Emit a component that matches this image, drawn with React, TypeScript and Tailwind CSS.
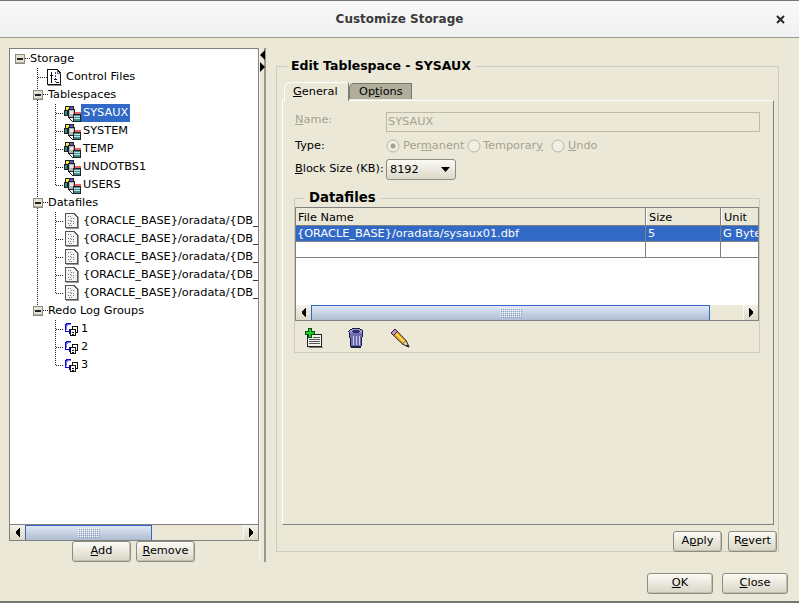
import React from 'react'

const dots = { stroke: '#222', strokeWidth: 1, strokeDasharray: '1 1', shapeRendering: 'crispEdges' as const }

function Expander({ x }: { x: number }) {
  return (
    <g shapeRendering="crispEdges">
      <rect x={x + 0.5} y={4.5} width={9} height={9} fill="#e4e1d2" stroke="#8a8a80" />
      <rect x={x + 1} y={12} width={8} height={1} fill="#b0ae9e" />
      <rect x={x + 2} y={8} width={6} height={2} fill="#222" />
    </g>
  )
}

// dotted connectors of one tree row, coordinates are relative to the tree box
function Guide({ kind, last, stem }: { kind: 'root' | 'branch' | 'leaf' | 'child'; last?: boolean; stem?: boolean }) {
  const w = kind === 'root' ? 20 : kind === 'branch' ? 38 : kind === 'leaf' ? 37 : 54
  return (
    <svg width={w} height={18} className="shrink-0">
      {kind === 'root' && (
        <>
          <Expander x={5} />
          <line x1={15} y1={8.5} x2={20} y2={8.5} {...dots} />
        </>
      )}
      {kind === 'leaf' && (
        <>
          <line x1={27.5} y1={0} x2={27.5} y2={18} {...dots} />
          <line x1={28} y1={9.5} x2={37} y2={9.5} {...dots} />
        </>
      )}
      {kind === 'branch' && (
        <>
          <line x1={27.5} y1={0} x2={27.5} y2={5} {...dots} />
          {!last && <line x1={27.5} y1={14} x2={27.5} y2={18} {...dots} />}
          <Expander x={23} />
          <line x1={33} y1={8.5} x2={38} y2={8.5} {...dots} />
        </>
      )}
      {kind === 'child' && (
        <>
          {stem && <line x1={27.5} y1={0} x2={27.5} y2={18} {...dots} />}
          <line x1={45.5} y1={0} x2={45.5} y2={last ? 10 : 18} {...dots} />
          <line x1={46} y1={9.5} x2={54} y2={9.5} {...dots} />
        </>
      )}
    </svg>
  )
}

function ControlFileIcon() {
  return (
    <svg width={15} height={17} viewBox="0 0 15 17" shapeRendering="crispEdges" className="shrink-0">
      <path d="M.5.5H10L13.5 4V15.5H.5Z" fill="#fff" stroke="#111" />
      <rect x={1} y={16} width={14} height={1} fill="#888" />
      <path d="M10 .5V4H13.5" fill="none" stroke="#666" />
      <path d="M4.5 3V14" stroke="#111" />
      <path d="M8.5 3V13" stroke="#2a3fa8" strokeDasharray="2 1" />
      <path d="M3 6H6M7 10H10M9 13H12" stroke="#111" />
    </svg>
  )
}

function TablespaceIcon() {
  return (
    <svg width={17} height={17} viewBox="0 0 17 17" shapeRendering="crispEdges" className="shrink-0">
      <rect x={1.5} y={1.5} width={4} height={6} fill="#f4ef3a" stroke="#222" />
      <rect x={5.5} y={1.5} width={4} height={3} fill="#5b5bd6" stroke="#222" />
      <rect x={.5} y={5.5} width={3} height={5} fill="#2f8f8f" stroke="#222" />
      <rect x={4.5} y={4.5} width={6} height={8} fill="#b4b4b4" stroke="#222" />
      <rect x={6} y={6} width={3} height={3} fill="#e8e8e8" />
      <rect x={11} y={7} width={6} height={3} fill="#f06060" />
      <path d="M5 13L9 17" stroke="#222" />
      <rect x={9.5} y={9.5} width={7} height={7} fill="#3f8f8f" stroke="#222" />
      <path d="M10 11.500H16M10 13.500H16" stroke="#c4e6e6" />
    </svg>
  )
}

function DataFileIcon() {
  return (
    <svg width={14} height={16} viewBox="0 0 14 16" shapeRendering="crispEdges" className="shrink-0">
      <path d="M.5.5H9L12.5 4V14.5H.5Z" fill="#f4f4f4" stroke="#555" />
      <rect x={1} y={15} width={13} height={1} fill="#999" />
      <rect x={13} y={4} width={1} height={12} fill="#999" />
      <path d="M3 3H7M6 5H10M3 7H6M6 8H10M3 10H6M8 10H10M4 12H8" stroke="#777" strokeDasharray="1 1" />
    </svg>
  )
}

function RedoIcon() {
  return (
    <svg width={14} height={14} viewBox="0 0 14 14" shapeRendering="crispEdges" className="shrink-0">
      <path d="M7 1.500H3L1.500 3V9.500H5" fill="none" stroke="#0808d8" />
      <path d="M7 2.500H4L2.500 4V8" fill="none" stroke="#7a7ae0" />
      <path d="M5.500 7V12M6.500 8V11" stroke="#0808d8" />
      <rect x={8.500} y={4.500} width={5} height={6} fill="#fff" stroke="#111" />
      <rect x={6.500} y={7.500} width={5} height={6} fill="#fff" stroke="#111" />
      <path d="M8 10H10M8 12H10" stroke="#111" />
    </svg>
  )
}

function Row({ guide, icon, label, selected, gap = 'ml-[3px]' }: { guide: React.ReactNode; icon?: React.ReactNode; label: string; selected?: boolean; gap?: string }) {
  return (
    <div className="flex items-center h-[18px] whitespace-nowrap">
      {guide}
      {icon}
      {selected ? (
        <span className="px-[2px] h-[18px] leading-[18px] bg-[#3169c6] text-white">{label}</span>
      ) : (
        <span className={`${icon ? gap : 'ml-[0px]'} leading-[18px]`}>{label}</span>
      )}
    </div>
  )
}

function ArrowBtn({ dir }: { dir: 'l' | 'r' }) {
  return (
    <div className={`w-[15px] h-full shrink-0 flex items-center justify-center bg-gradient-to-b from-[#f4f2e6] to-[#dcd9c8] ${dir === 'r' ? 'border-l border-l-[#fbfaf2]' : ''}`}>
      <svg width={5} height={9} viewBox="0 0 5 9" shapeRendering="crispEdges">
        <path d={dir === 'l' ? 'M5 0V9H4V8H3V7H2V6H1V3H2V2H3V1H4V0Z' : 'M0 0V9H1V8H2V7H3V6H4V3H3V2H2V1H1V0Z'} fill="#000" />
      </svg>
    </div>
  )
}

function Scrollbar({ thumb }: { thumb: string }) {
  return (
    <div className="h-[15px] flex shrink-0 bg-[#ebe8d8]">
      <ArrowBtn dir="l" />
      <div className={`${thumb} h-full flex items-center justify-center border-t border-x border-[#3169c6] bg-gradient-to-b from-[#dfe7f2] to-[#aebdd2]`}>
        <svg width={22} height={10} className="opacity-80">
          <defs>
            <pattern id="grip" width={2} height={2} patternUnits="userSpaceOnUse">
              <rect width={1} height={1} fill="#fff" />
              <rect x={1} y={1} width={1} height={1} fill="#7f95b8" />
            </pattern>
          </defs>
          <rect width={22} height={10} fill="url(#grip)" />
        </svg>
      </div>
      <div className="flex-1" />
      <ArrowBtn dir="r" />
    </div>
  )
}

function Btn({ w, children }: { w: string; children: React.ReactNode }) {
  return (
    <button className={`${w} h-[21px] flex items-center justify-center rounded-[3px] border border-[#8c8c80] bg-gradient-to-b from-[#fbfaf4] to-[#d9d6c6] text-black shadow-[inset_-1px_-1px_0_#c4c1b0]`}>
      {children}
    </button>
  )
}

function Radio({ checked }: { checked?: boolean }) {
  return (
    <svg width={14} height={14} className="shrink-0">
      <circle cx={7} cy={7} r={6} fill="#f1efe4" stroke="#b9b6a4" />
      {checked && <circle cx={7} cy={7} r={2.500} fill="#a5a28f" />}
    </svg>
  )
}

function AddIcon() {
  return (
    <svg width={19} height={20} viewBox="0 0 19 20" shapeRendering="crispEdges">
      <rect x={3.500} y={6.500} width={14} height={12} fill="#f4f4ec" stroke="#222" />
      <rect x={5} y={19} width={14} height={1} fill="#777" />
      <path d="M9 9.500H16M5 11.500H16M5 13.500H16M5 15.500H16" stroke="#555" />
      <path d="M4.500 .500H7.500V3.500H10.500V6.500H7.500V9.500H4.500V6.500H1.500V3.500H4.500Z" fill="#1fd12f" stroke="#064d10" />
    </svg>
  )
}

function TrashIcon() {
  return (
    <svg width={16} height={20} viewBox="0 0 16 20" shapeRendering="crispEdges">
      <ellipse cx={8} cy={3.500} rx={7} ry={3} fill="#9a9ad0" stroke="#1c1c44" />
      <ellipse cx={8} cy={3.500} rx={4} ry={1.500} fill="#2e2e66" />
      <path d="M1.500 5L3 18.500H13L14.500 5" fill="#6f6fb0" stroke="#1c1c44" />
      <path d="M5 8V17M8 8V17M11 8V17" stroke="#c8c8ea" />
      <rect x={3} y={18} width={10} height={2} fill="#1c1c44" />
    </svg>
  )
}

function PencilIcon() {
  return (
    <svg width={20} height={20} viewBox="0 0 20 20">
      <path d="M1 5L5 1L16 12.500L19 19L12.500 16Z" fill="#f5ab1c" stroke="#222" />
      <path d="M1 5L5 1L7.500 3.500L3.500 7.500Z" fill="#c88ad0" stroke="#222" />
      <path d="M6 5.500L15 15" stroke="#ffe27a" strokeWidth={1.500} />
      <path d="M12.500 16L16 12.500L19 19Z" fill="#e8dcb0" stroke="#222" strokeWidth={.7} />
      <path d="M17 16.500L19 19L16 18Z" fill="#000" />
    </svg>
  )
}

function StorageTree() {
  const spaces = ['SYSAUX', 'SYSTEM', 'TEMP', 'UNDOTBS1', 'USERS']
  return (
    <div className="flex-1 bg-white overflow-hidden pt-[1px]">
      <Row guide={<Guide kind="root" />} label="Storage" />
      <Row guide={<Guide kind="leaf" />} icon={<ControlFileIcon />} label="Control Files" gap="ml-[4px]" />
      <Row guide={<Guide kind="branch" />} label="Tablespaces" />
      {spaces.map((s, i) => (
        <Row key={s} guide={<Guide kind="child" stem last={i === spaces.length - 1} />} icon={<TablespaceIcon />} label={s} selected={i === 0} gap="ml-[2px]" />
      ))}
      <Row guide={<Guide kind="branch" />} label="Datafiles" />
      {[0, 1, 2, 3, 4].map((i) => (
        <Row key={i} guide={<Guide kind="child" stem last={i === 4} />} icon={<span className="ml-[1px] flex"><DataFileIcon /></span>} label="{ORACLE_BASE}/oradata/{DB_" gap="ml-[4px]" />
      ))}
      <Row guide={<Guide kind="branch" last />} label="Redo Log Groups" />
      {['1', '2', '3'].map((n, i) => (
        <Row key={n} guide={<Guide kind="child" last={i === 2} />} icon={<RedoIcon />} label={n} gap="ml-[3px]" />
      ))}
    </div>
  )
}

function DatafilesTable() {
  const row = 'grid grid-cols-[350px_75px_1fr] shrink-0 border-b border-[#808080] whitespace-nowrap overflow-hidden'
  return (
    <div className="h-[114px] flex flex-col border border-[#808080] bg-white">
      <div className={`${row} h-[18px] leading-[19px] bg-[#ebe8d8]`}>
        <div className="pl-[2px] border-r border-[#808080]">File Name</div>
        <div className="pl-[2px] border-r border-[#808080] border-l border-l-white">Size</div>
        <div className="pl-[2px] border-l border-l-white">Unit</div>
      </div>
      <div className={`${row} h-[16px] leading-[15px] bg-[#3169c6] text-white`}>
        <div className="pl-[1px] border-r border-[#808080]">{'{ORACLE_BASE}/oradata/sysaux01.dbf'}</div>
        <div className="pl-[2px] border-r border-[#808080]">5</div>
        <div className="pl-[2px] overflow-hidden">G Byte</div>
      </div>
      <div className={`${row} h-[16px]`}>
        <div className="border-r border-[#808080]" />
        <div className="border-r border-[#808080]" />
        <div />
      </div>
      <div className="flex-1" />
      <div className="shrink-0">
        <Scrollbar thumb="w-[399px]" />
      </div>
    </div>
  )
}

export default function App() {
  return (
    <div className="w-[799px] h-[603px] flex flex-col overflow-hidden bg-[#ebe8d8] text-black text-[11.3px] font-['DejaVu_Sans',sans-serif]">
      <div className="h-[38px] shrink-0 relative flex items-center justify-center border-t border-t-[#777] border-b border-b-[#9b9a8e] bg-gradient-to-b from-[#f9f9f9] to-[#f1f1f1]">
        <span className="text-[12px] font-bold text-[#3a3a3a]">Customize Storage</span>
        <svg width={9} height={9} viewBox="0 0 9 9" className="absolute right-[14px] top-[14px]">
          <path d="M1 1L8 8M8 1L1 8" stroke="#2a2a2a" strokeWidth={2} />
        </svg>
      </div>

      <div className="h-[525px] shrink-0 flex pt-[10px]">
        <div className="w-[259px] shrink-0 pl-[9px] flex flex-col">
          <div className="h-[493px] w-[250px] flex flex-col border border-[#808080]">
            <StorageTree />
            <div className="border-t border-[#808080] shrink-0">
              <Scrollbar thumb="w-[127px]" />
            </div>
          </div>
          <div className="flex gap-[5px] ml-[63px]">
            <Btn w="w-[59px]"><span><u>A</u>dd</span></Btn>
            <Btn w="w-[59px]"><span><u>R</u>emove</span></Btn>
          </div>
        </div>

        <div className="w-[7px] h-[514px] shrink-0 flex flex-col gap-[2px] pt-[2px] border-l border-l-[#f7f6ee] border-r-2 border-r-[#9a998d]">
          <svg width={5} height={10}><path d="M5 0V10L0 5Z" fill="#000" /></svg>
          <svg width={5} height={10}><path d="M0 0V10L5 5Z" fill="#000" /></svg>
        </div>

        <div className="pl-[10px]">
          <fieldset className="w-[503px] h-[494px] border border-[#cfcdbd] mt-[10px]">
            <legend className="ml-[10px] px-[4px] h-[16px] leading-[16px] text-[12.5px] font-bold">Edit Tablespace - SYSAUX</legend>
            <div className="pl-[5px] pt-[8px]">
              <div className="flex ml-[2px] h-[18px] relative">
                <div className="w-[65px] h-[19px] pl-[8px] leading-[18px] bg-[#ebe8d8] border-t border-l border-r border-t-white border-l-white border-r-[#808080] rounded-tl-[6px] relative z-10">
                  <u>G</u>eneral
                </div>
                <div className="w-[63px] h-[16px] mt-[1px] pl-[9px] leading-[16px] bg-[#b1af9b] border-t border-l border-r border-[#77766a] rounded-tl-[5px]">
                  Op<u>t</u>ions
                </div>
              </div>
              <div className="w-[492px] h-[425px] border border-l-white border-t-white border-r-[#808080] border-b-[#808080] pl-[12px] pt-[11px]">
                <div className="flex h-[20px]">
                  <span className="w-[91px] text-[#a5a28f]"><u>N</u>ame:</span>
                  <div className="w-[374px] h-[20px] border border-[#bdbaa8] bg-[#ebe8d8] text-[#a5a28f] pl-[1px] leading-[18px]">SYSAUX</div>
                </div>
                <div className="flex items-center h-[14px] mt-[7px]">
                  <span className="w-[91px]">Type:</span>
                  <Radio checked />
                  <span className="ml-[3px] w-[64px] text-[#a5a28f]">Per<u>m</u>anent</span>
                  <Radio />
                  <span className="ml-[2px] w-[68px] text-[#a5a28f]">Temporar<u>y</u></span>
                  <Radio />
                  <span className="ml-[3px] text-[#a5a28f]"><u>U</u>ndo</span>
                </div>
                <div className="flex items-center h-[21px] mt-[6px]">
                  <span className="w-[91px] whitespace-nowrap"><u>B</u>lock Size (KB):</span>
                  <div className="w-[70px] h-[21px] flex items-center justify-between pl-[3px] pr-[5px] rounded-[3px] border border-[#8c8c80] bg-gradient-to-b from-[#fbfaf4] to-[#dcd9c9]">
                    <span className="pt-[2px]">8192</span>
                    <svg width={9} height={5}><path d="M0 0H9L4.500 5Z" fill="#000" /></svg>
                  </div>
                </div>
                <fieldset className="w-[466px] h-[163px] mt-[10px] ml-[-1px] border border-[#cfcdbd]">
                  <legend className="ml-[10px] px-[4px] h-[16px] leading-[16px] text-[13.3px] font-bold">Datafiles</legend>
                  <div className="pt-[1px]">
                    <DatafilesTable />
                    <div className="flex items-center h-[32px] pl-[9px] pt-[1px]">
                      <AddIcon />
                      <span className="ml-[25px] flex"><TrashIcon /></span>
                      <span className="ml-[26px] flex"><PencilIcon /></span>
                    </div>
                  </div>
                </fieldset>
              </div>
              <div className="flex justify-end gap-[6px] mt-[6px] pr-[1px]">
                <Btn w="w-[49px]"><span>A<u>p</u>ply</span></Btn>
                <Btn w="w-[49px]"><span>R<u>e</u>vert</span></Btn>
              </div>
            </div>
          </fieldset>
        </div>
      </div>

      <div className="flex-1 flex justify-end gap-[9px] pt-[10px] pr-[11px]">
        <Btn w="w-[66px]"><span><u>O</u>K</span></Btn>
        <Btn w="w-[66px]"><span><u>C</u>lose</span></Btn>
      </div>
      <div className="h-[2px] shrink-0 bg-[#77766c]" />
    </div>
  )
}
